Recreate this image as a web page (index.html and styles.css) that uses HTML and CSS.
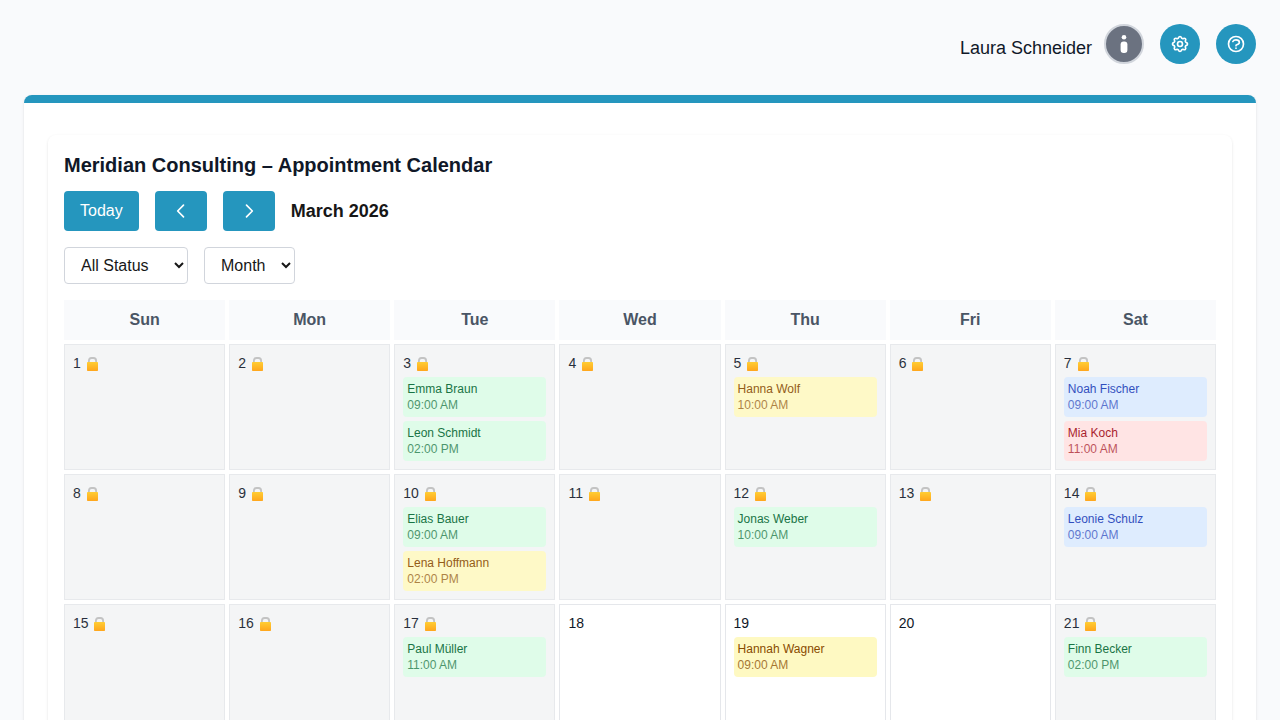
FILE: index.html
```
<!DOCTYPE html>
<html lang="en">
<head>
<meta charset="utf-8">
<meta name="viewport" content="width=device-width, initial-scale=1">
<title>Appointment Calendar</title>
<link rel="stylesheet" href="styles.css">
</head>
<body>
<svg class="defs" aria-hidden="true">
  <defs>
    <linearGradient id="lock-body" x1="0" y1="0" x2="0" y2="1">
      <stop offset="0" stop-color="#ffc81e"/>
      <stop offset="1" stop-color="#ff9d05"/>
    </linearGradient>
    <symbol id="lock" viewBox="0 0 14 14">
      <path d="M3.900 7V3.800Q3.900 1 6.500 1H8.500Q11.100 1 11.100 3.800V7" fill="none" stroke="#bdbdbd" stroke-width="1.800"/>
      <rect x="2" y="5" width="11" height="9" rx="0.800" fill="url(#lock-body)"/>
    </symbol>
  </defs>
</svg>
<header class="topbar">
  <div class="user">
    <span class="user-name">Laura Schneider</span>
    <svg class="avatar" viewBox="0 0 36 36" role="img" aria-label="Avatar">
      <circle cx="18" cy="11.300" r="2.300"/>
      <rect x="14.600" y="15.600" width="6.800" height="11.400" rx="3"/>
    </svg>
  </div>
  <button class="round-btn" type="button" aria-label="Settings">
    <svg class="icon" viewBox="0 0 24 24"><path d="M10.325 4.317c.426-1.756 2.924-1.756 3.35 0a1.724 1.724 0 002.573 1.066c1.543-.94 3.31.826 2.37 2.37a1.724 1.724 0 001.065 2.572c1.756.426 1.756 2.924 0 3.35a1.724 1.724 0 00-1.066 2.573c.94 1.543-.826 3.31-2.37 2.37a1.724 1.724 0 00-2.572 1.065c-.426 1.756-2.924 1.756-3.35 0a1.724 1.724 0 00-2.573-1.066c-1.543.94-3.31-.826-2.37-2.37a1.724 1.724 0 00-1.065-2.572c-1.756-.426-1.756-2.924 0-3.35a1.724 1.724 0 001.066-2.573c-.94-1.543.826-3.31 2.37-2.37.996.608 2.296.07 2.572-1.065z"/><path d="M15 12a3 3 0 11-6 0 3 3 0 016 0z"/></svg>
  </button>
  <button class="round-btn" type="button" aria-label="Help">
    <svg class="icon" viewBox="0 0 24 24"><path d="M8.228 9c.549-1.165 2.03-2 3.772-2 2.21 0 4 1.343 4 3 0 1.4-1.278 2.575-3.006 2.907-.542.104-.994.54-.994 1.093m0 3h.01M21 12a9 9 0 11-18 0 9 9 0 0118 0z"/></svg>
  </button>
</header>

<main class="panel">
  <section class="calendar">
    <h1 class="title">Meridian Consulting – Appointment Calendar</h1>
    <div class="toolbar">
      <button class="btn" type="button">Today</button>
      <button class="btn" type="button" aria-label="Previous month"><svg class="icon" viewBox="0 0 24 24"><path d="M15 19l-7-7 7-7"/></svg></button>
      <button class="btn" type="button" aria-label="Next month"><svg class="icon" viewBox="0 0 24 24"><path d="M9 5l7 7-7 7"/></svg></button>
      <h2 class="month">March 2026</h2>
    </div>
    <div class="filters">
      <select class="select status" aria-label="Status"><option>All Status</option></select>
      <select class="select" aria-label="View"><option>Month</option></select>
    </div>
    <div class="grid">
      <div class="weekday">Sun</div>
      <div class="weekday">Mon</div>
      <div class="weekday">Tue</div>
      <div class="weekday">Wed</div>
      <div class="weekday">Thu</div>
      <div class="weekday">Fri</div>
      <div class="weekday">Sat</div>

      <div class="day locked"><div class="date">1 <svg class="lock"><use href="#lock"/></svg></div></div>
      <div class="day locked"><div class="date">2 <svg class="lock"><use href="#lock"/></svg></div></div>
      <div class="day locked"><div class="date">3 <svg class="lock"><use href="#lock"/></svg></div>
        <div class="event green"><div>Emma Braun</div><div class="time">09:00 AM</div></div>
        <div class="event green"><div>Leon Schmidt</div><div class="time">02:00 PM</div></div>
      </div>
      <div class="day locked"><div class="date">4 <svg class="lock"><use href="#lock"/></svg></div></div>
      <div class="day locked"><div class="date">5 <svg class="lock"><use href="#lock"/></svg></div>
        <div class="event yellow"><div>Hanna Wolf</div><div class="time">10:00 AM</div></div>
      </div>
      <div class="day locked"><div class="date">6 <svg class="lock"><use href="#lock"/></svg></div></div>
      <div class="day locked"><div class="date">7 <svg class="lock"><use href="#lock"/></svg></div>
        <div class="event blue"><div>Noah Fischer</div><div class="time">09:00 AM</div></div>
        <div class="event red"><div>Mia Koch</div><div class="time">11:00 AM</div></div>
      </div>

      <div class="day locked"><div class="date">8 <svg class="lock"><use href="#lock"/></svg></div></div>
      <div class="day locked"><div class="date">9 <svg class="lock"><use href="#lock"/></svg></div></div>
      <div class="day locked"><div class="date">10 <svg class="lock"><use href="#lock"/></svg></div>
        <div class="event green"><div>Elias Bauer</div><div class="time">09:00 AM</div></div>
        <div class="event yellow"><div>Lena Hoffmann</div><div class="time">02:00 PM</div></div>
      </div>
      <div class="day locked"><div class="date">11 <svg class="lock"><use href="#lock"/></svg></div></div>
      <div class="day locked"><div class="date">12 <svg class="lock"><use href="#lock"/></svg></div>
        <div class="event green"><div>Jonas Weber</div><div class="time">10:00 AM</div></div>
      </div>
      <div class="day locked"><div class="date">13 <svg class="lock"><use href="#lock"/></svg></div></div>
      <div class="day locked"><div class="date">14 <svg class="lock"><use href="#lock"/></svg></div>
        <div class="event blue"><div>Leonie Schulz</div><div class="time">09:00 AM</div></div>
      </div>

      <div class="day locked"><div class="date">15 <svg class="lock"><use href="#lock"/></svg></div></div>
      <div class="day locked"><div class="date">16 <svg class="lock"><use href="#lock"/></svg></div></div>
      <div class="day locked"><div class="date">17 <svg class="lock"><use href="#lock"/></svg></div>
        <div class="event green"><div>Paul Müller</div><div class="time">11:00 AM</div></div>
      </div>
      <div class="day"><div class="date">18</div></div>
      <div class="day"><div class="date">19</div>
        <div class="event yellow"><div>Hannah Wagner</div><div class="time">09:00 AM</div></div>
      </div>
      <div class="day"><div class="date">20</div></div>
      <div class="day locked"><div class="date">21 <svg class="lock"><use href="#lock"/></svg></div>
        <div class="event green"><div>Finn Becker</div><div class="time">02:00 PM</div></div>
      </div>
    </div>
  </section>
</main>
</body>
</html>
```
FILE: styles.css
```
* {
  box-sizing: border-box;
}

body {
  margin: 0;
  padding: 24px;
  background: #f9fafc;
  color: #101828;
  font-family: "Liberation Sans", Arial, sans-serif;
  font-size: 16px;
  line-height: 24px;
}

h1,
h2 {
  margin: 0;
}

button,
select {
  font: inherit;
}

.defs {
  position: absolute;
  width: 0;
  height: 0;
}

.topbar {
  display: flex;
  justify-content: flex-end;
  align-items: center;
  gap: 16px;
  margin-bottom: 31px;
}

.user {
  display: flex;
  align-items: center;
  gap: 12px;
}

.user-name {
  padding-top: 8px;
  font-size: 18px;
  line-height: 28px;
}

.avatar {
  width: 40px;
  height: 40px;
  border: 2px solid #d1d5dc;
  border-radius: 50%;
  background: #6b7280;
  fill: #fff;
}

.round-btn {
  display: flex;
  align-items: center;
  justify-content: center;
  width: 40px;
  height: 40px;
  padding: 0;
  border: 0;
  border-radius: 50%;
  background: #2596be;
  color: #fff;
}

.icon {
  display: block;
  width: 20px;
  height: 20px;
  fill: none;
  stroke: currentColor;
  stroke-width: 2;
  stroke-linecap: round;
  stroke-linejoin: round;
}

.panel {
  padding: 32px 24px 24px;
  border-top: 8px solid #2596be;
  border-radius: 8px;
  background: #fff;
  box-shadow: 0 1px 3px rgba(0, 0, 0, 0.1), 0 1px 2px -1px rgba(0, 0, 0, 0.1);
}

.calendar {
  display: flex;
  flex-direction: column;
  padding: 16px;
  border-radius: 8px;
  box-shadow: 0 1px 3px rgba(0, 0, 0, 0.1), 0 1px 2px -1px rgba(0, 0, 0, 0.1);
}

.title {
  margin-bottom: 12px;
  font-size: 20px;
  line-height: 28px;
}

.toolbar,
.filters {
  display: flex;
  align-items: center;
  gap: 16px;
  margin-bottom: 16px;
}

.btn {
  padding: 8px 16px;
  min-height: 40px;
  border: 0;
  border-radius: 4px;
  background: #2596be;
  color: #fff;
}

.month {
  color: #171717;
  font-size: 18px;
  line-height: 28px;
}

.select {
  padding: 8px 12px;
  border: 1px solid #d1d5dc;
  border-radius: 4px;
  background: #fff;
  color: #171717;
  line-height: normal;
}

.status {
  min-width: 124px;
}

.grid {
  display: grid;
  grid-template-columns: repeat(7, minmax(0, 1fr));
  gap: 4px;
}

.weekday {
  padding: 8px;
  background: #f9fafc;
  color: #4a5565;
  font-weight: bold;
  text-align: center;
}

.day {
  display: flex;
  flex-direction: column;
  gap: 4px;
  min-height: 126px;
  padding: 8px;
  border: 1px solid #e5e7eb;
  background: #fff;
}

.locked {
  background: #f3f4f6;
  opacity: 0.9;
}

.date {
  font-size: 14px;
  line-height: 20px;
}

.lock {
  width: 14px;
  height: 14px;
  vertical-align: -3px;
}

.event {
  padding: 4px;
  border-radius: 4px;
  font-size: 12px;
  line-height: 16px;
}

.time {
  opacity: 0.75;
}

.green {
  background: #dcfce7;
  color: #016630;
}

.yellow {
  background: #fef9c2;
  color: #894b00;
}

.blue {
  background: #dbeafe;
  color: #193cb8;
}

.red {
  background: #ffe2e2;
  color: #9f0712;
}
```
